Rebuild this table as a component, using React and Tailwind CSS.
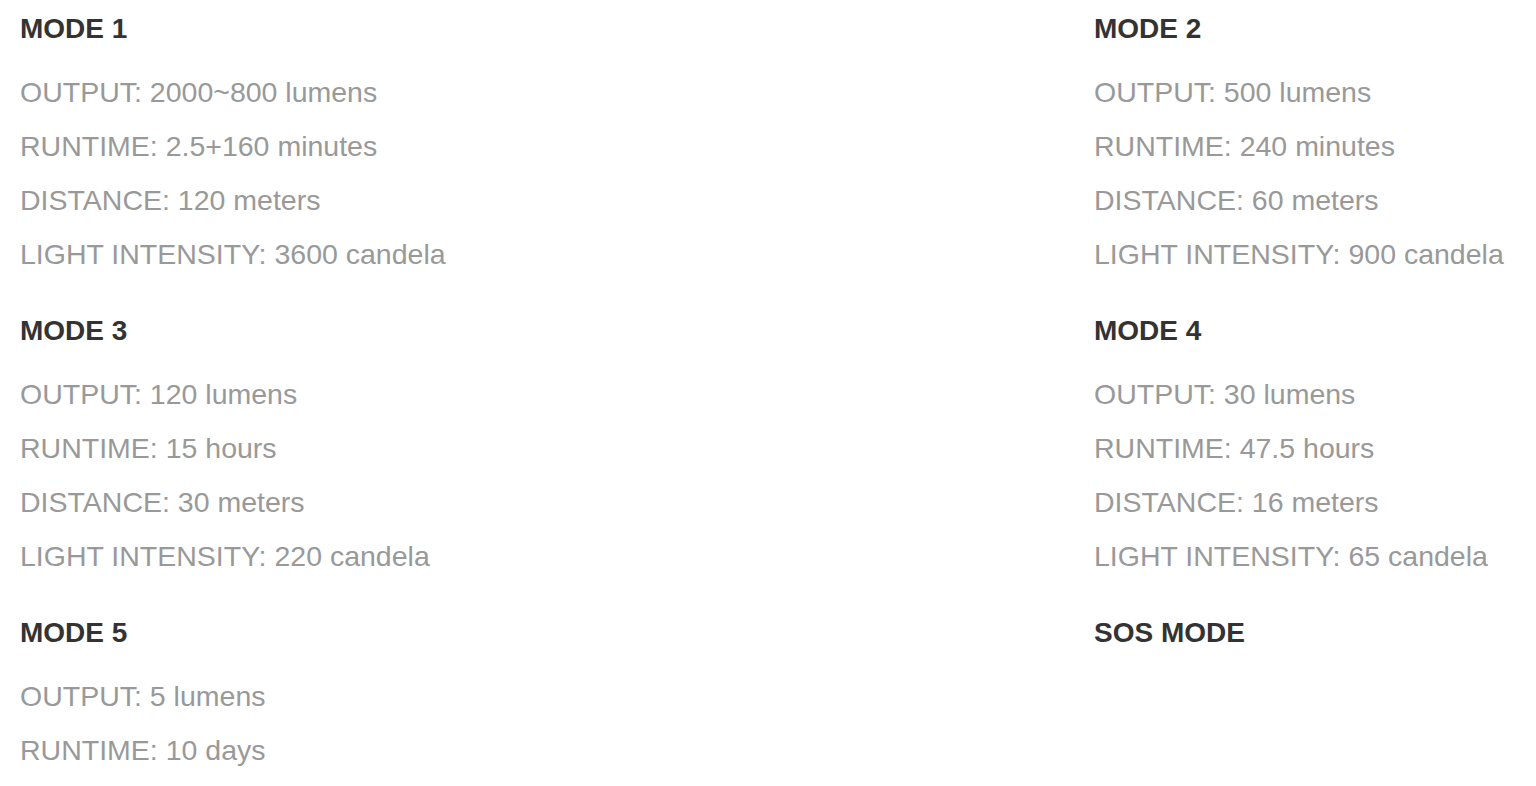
const modes = [
    {
        title: 'MODE 1',
        lines: ['OUTPUT: 2000~800 lumens', 'RUNTIME: 2.5+160 minutes', 'DISTANCE: 120 meters', 'LIGHT INTENSITY: 3600 candela'],
    },
    {
        title: 'MODE 2',
        lines: ['OUTPUT: 500 lumens', 'RUNTIME: 240 minutes', 'DISTANCE: 60 meters', 'LIGHT INTENSITY: 900 candela'],
    },
    {
        title: 'MODE 3',
        lines: ['OUTPUT: 120 lumens', 'RUNTIME: 15 hours', 'DISTANCE: 30 meters', 'LIGHT INTENSITY: 220 candela'],
    },
    {
        title: 'MODE 4',
        lines: ['OUTPUT: 30 lumens', 'RUNTIME: 47.5 hours', 'DISTANCE: 16 meters', 'LIGHT INTENSITY: 65 candela'],
    },
    {
        title: 'MODE 5',
        lines: ['OUTPUT: 5 lumens', 'RUNTIME: 10 days'],
    },
    {
        title: 'SOS MODE',
        lines: [],
    },
];

function ModeBlock({ title, lines }) {
    return (
        <div className="mb-[30px]">
            <h3 className="text-[28px] leading-[40px] font-bold text-[#333333] mb-[16px]">{title}</h3>
            {lines.map((line) => (
                <p key={line} className="text-[28.5px] leading-[54px] text-[#999999]">{line}</p>
            ))}
        </div>
    );
}

export default function App() {
    return (
        <div className="min-h-screen bg-white font-['Liberation_Sans',Arial,sans-serif] pt-[9px] pl-[20px]">
            <div className="grid grid-cols-[1074px_1fr]">
                {modes.map((m) => (
                    <ModeBlock key={m.title} title={m.title} lines={m.lines} />
                ))}
            </div>
        </div>
    );
}
